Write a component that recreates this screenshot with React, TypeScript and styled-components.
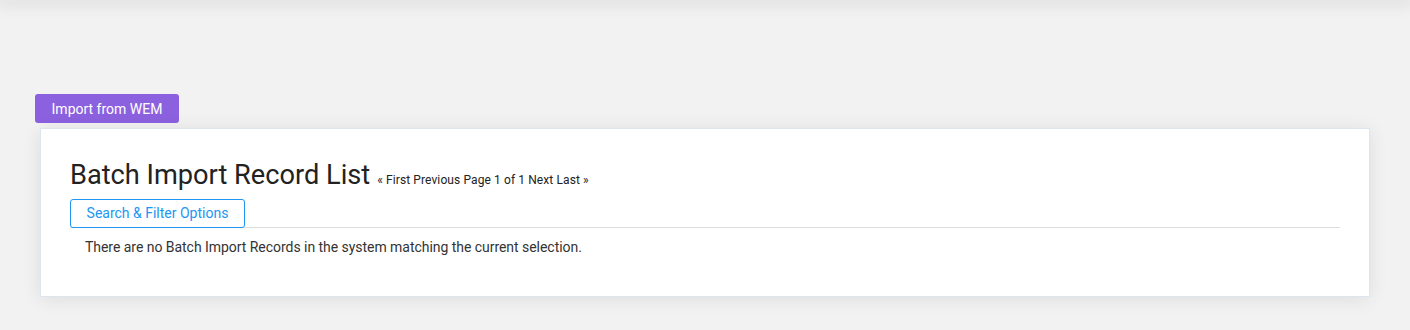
import React from "react";
import styled, { createGlobalStyle } from "styled-components";

const Global = createGlobalStyle`
  html, body { margin: 0; padding: 0; background: #f2f2f2; }
  body { font-family: Roboto, "Liberation Sans", sans-serif; color: #333; overflow: hidden; }
  * { box-sizing: border-box; }
`;

const Page = styled.div`
  width: 1410px;
  height: 330px;
  position: relative;
  overflow: hidden;
`;

const HeaderShadow = styled.div`
  height: 0;
  box-shadow: 0 0 16px 4px rgba(0, 0, 0, 0.12);
`;

const Content = styled.div`
  padding: 94px 40px 0 35px;
  display: flex;
  flex-direction: column;
  align-items: flex-start;
`;

const PrimaryButton = styled.button`
  height: 29px;
  width: 144px;
  border: none;
  border-radius: 3px;
  background: #8c61df;
  color: #fff;
  font-family: Roboto, "Liberation Sans", sans-serif;
  font-size: 14px;
  padding: 0;
  cursor: pointer;
`;

const Card = styled.section`
  margin: 5px 0 0 5px;
  align-self: stretch;
  background: #fff;
  border: 1px solid #dde5ee;
  box-shadow: 0 2px 18px rgba(0, 0, 0, 0.09);
  padding: 28px 29px 39px 29px;
  display: flex;
  flex-direction: column;
`;

const TitleRow = styled.div`
  display: flex;
  align-items: baseline;
  gap: 7px;
`;

const Title = styled.h1`
  margin: 0;
  font-size: 27.2px;
  font-weight: 400;
  color: #222;
  line-height: 36px;
`;

const Pager = styled.span`
  font-size: 12px;
  letter-spacing: 0.1px;
  color: #222;
`;

const FilterBar = styled.div`
  margin-top: 6px;
  border-bottom: 1px solid #ddd;
  display: flex;
`;

const OutlineButton = styled.button`
  height: 29px;
  width: 175px;
  background: #fff;
  border: 1px solid #2196f3;
  border-radius: 3px;
  color: #2196f3;
  font-family: Roboto, "Liberation Sans", sans-serif;
  font-size: 14px;
  padding: 0 0 1px;
  margin-bottom: -1px;
`;

const Message = styled.p`
  margin: 9px 0 0 15px;
  font-size: 14px;
  letter-spacing: -0.04px;
  color: #333;
  line-height: 20px;
`;

export default function App() {
  return (
    <Page>
      <Global />
      <HeaderShadow />
      <Content>
        <PrimaryButton>Import from WEM</PrimaryButton>
        <Card>
          <TitleRow>
            <Title>Batch Import Record List</Title>
            <Pager>« First Previous Page 1 of 1 Next Last »</Pager>
          </TitleRow>
          <FilterBar>
            <OutlineButton>Search &amp; Filter Options</OutlineButton>
          </FilterBar>
          <Message>There are no Batch Import Records in the system matching the current selection.</Message>
        </Card>
      </Content>
    </Page>
  );
}
